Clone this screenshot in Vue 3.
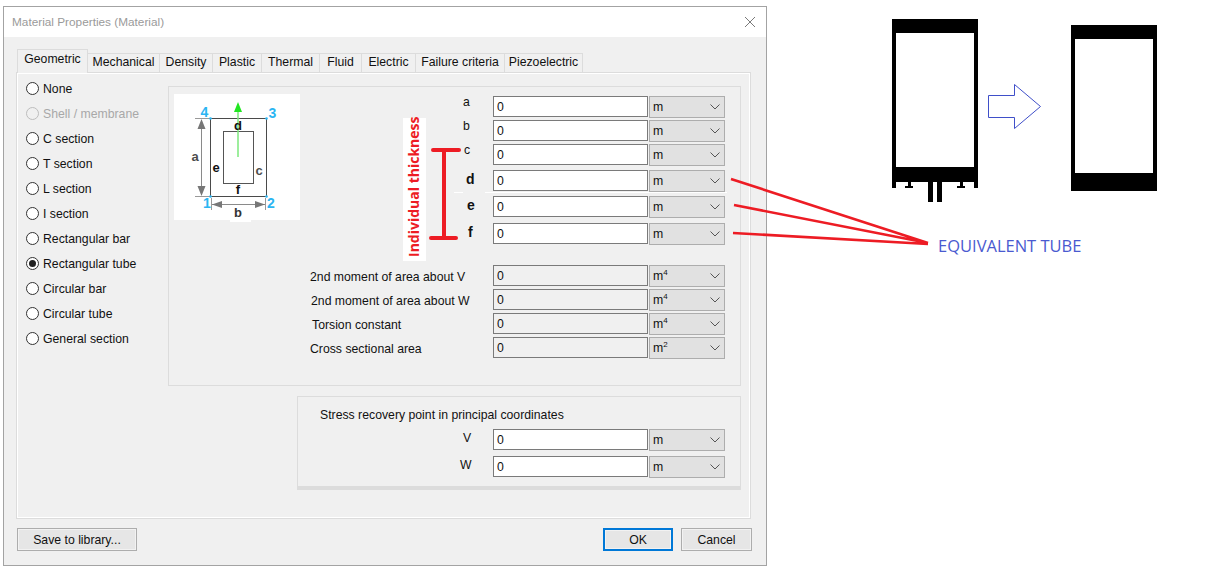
<script setup>
const tabs = [
  { label: 'Geometric', width: 71 },
  { label: 'Mechanical', width: 72 },
  { label: 'Density', width: 53 },
  { label: 'Plastic', width: 49 },
  { label: 'Thermal', width: 58 },
  { label: 'Fluid', width: 42 },
  { label: 'Electric', width: 54 },
  { label: 'Failure criteria', width: 89 },
  { label: 'Piezoelectric', width: 78 }
]

const sections = [
  { label: 'None' },
  { label: 'Shell / membrane', disabled: true },
  { label: 'C section' },
  { label: 'T section' },
  { label: 'L section' },
  { label: 'I section' },
  { label: 'Rectangular bar' },
  { label: 'Rectangular tube', checked: true },
  { label: 'Circular bar' },
  { label: 'Circular tube' },
  { label: 'General section' }
]

// top is the gap above the row, pad the label's left offset
const rows = [
  { label: 'a', pad: 163, top: 0, lift: true },
  { label: 'b', pad: 163, top: 3, lift: true },
  { label: 'c', pad: 164, top: 3, lift: true },
  { label: 'd', pad: 166, top: 5, bold: true },
  { label: 'e', pad: 167, top: 5, bold: true },
  { label: 'f', pad: 168, top: 6, bold: true },
  { label: '2nd moment of area about V', pad: 10, top: 21, unit: '4', off: true },
  { label: '2nd moment of area about W', pad: 11, top: 3, unit: '4', off: true },
  { label: 'Torsion constant', pad: 12, top: 3, unit: '4', off: true },
  { label: 'Cross sectional area', pad: 10, top: 3, unit: '2', off: true }
]

const stress = [
  { label: 'V', pad: 165, top: 0 },
  { label: 'W', pad: 162, top: 6 }
]
</script>

<template>
  <div class="canvas">
    <div class="dialog">
      <div class="titlebar">
        <span class="title">Material Properties (Material)</span>
        <svg class="close" width="12" height="12" viewBox="0 0 12 12">
          <path d="M1 1l10 10M11 1L1 11" stroke="#7a7a7a" fill="none" />
        </svg>
      </div>

      <div class="body">
        <div class="tabs">
          <div
            v-for="(tab, i) in tabs"
            :key="tab.label"
            class="tab"
            :class="{ active: i === 0 }"
            :style="{ width: tab.width + 'px' }"
          >{{ tab.label }}</div>
        </div>

        <div class="pane">
          <div class="sections">
            <div v-for="s in sections" :key="s.label" class="radio" :class="{ disabled: s.disabled }">
              <span class="dot" :class="{ checked: s.checked }"></span>
              <span>{{ s.label }}</span>
            </div>
          </div>

          <div class="right">
            <div class="panel">
              <svg class="diagram" width="126" height="126" viewBox="0 0 126 126">
                <rect width="126" height="126" fill="#fff" />
                <rect x="36.5" y="24.5" width="56" height="78" fill="none" stroke="#4a4a4a" />
                <rect x="49.5" y="37.5" width="30" height="52" fill="none" stroke="#555" />
                <path d="M21 24.5h15M21 102.5h15M37.5 104v12M91.5 104v12" stroke="#999" fill="none" />
                <path d="M27.5 26v75M38 110.5h53" stroke="#8a8a8a" fill="none" />
                <path d="M27.5 25l-4 10h8zM27.5 102l-4-10h8zM38 110.5l10-3.5v7zM91 110.5l-10-3.5v7z" fill="#777" />
                <path d="M64 63V16" stroke="#7ce87c" stroke-width="1.5" />
                <path d="M64 8l-4 10h8z" fill="#22e622" />
                <g fill="#2bb5f2">
                  <circle cx="36.5" cy="24.5" r="1.3" />
                  <circle cx="92.5" cy="24.5" r="1.3" />
                  <circle cx="36.5" cy="102.5" r="1.3" />
                  <circle cx="92.5" cy="102.5" r="1.3" />
                </g>
                <g class="dim">
                  <text x="21" y="67" fill="#4d4d4d">a</text>
                  <text x="64" y="36" fill="#111">d</text>
                  <text x="42" y="78" fill="#111">e</text>
                  <text x="85" y="81" fill="#4d4d4d">c</text>
                  <text x="64" y="100" fill="#111">f</text>
                  <text x="64" y="123" fill="#333">b</text>
                </g>
                <g class="num">
                  <text x="30.5" y="23">4</text>
                  <text x="98.5" y="24">3</text>
                  <text x="33" y="114">1</text>
                  <text x="97" y="114">2</text>
                </g>
              </svg>

              <div class="form">
                <div v-for="r in rows" :key="r.label" class="row" :style="{ marginTop: r.top + 'px' }">
                  <span
                    class="row-label"
                    :class="{ lift: r.lift, bold: r.bold, low: r.off }"
                    :style="{ paddingLeft: r.pad + 'px' }"
                  >{{ r.label }}</span>
                  <input class="field" :class="{ off: r.off }" value="0" readonly />
                  <div class="unit">
                    <span>m<sup v-if="r.unit">{{ r.unit }}</sup></span>
                    <svg width="10" height="6" viewBox="0 0 10 6"><path d="M.5.5L5 5 9.5.5" stroke="#555" fill="none" /></svg>
                  </div>
                </div>
              </div>
            </div>

            <div class="stress">
              <div class="stress-title">Stress recovery point in principal coordinates</div>
              <div v-for="r in stress" :key="r.label" class="row" :style="{ marginTop: r.top + 'px' }">
                <span class="stress-label" :style="{ paddingLeft: r.pad + 'px' }">{{ r.label }}</span>
                <input class="field" value="0" readonly />
                <div class="unit">
                  <span>m</span>
                  <svg width="10" height="6" viewBox="0 0 10 6"><path d="M.5.5L5 5 9.5.5" stroke="#555" fill="none" /></svg>
                </div>
              </div>
            </div>
          </div>
        </div>

        <div class="actions">
          <button class="btn save">Save to library...</button>
          <span class="spacer"></span>
          <button class="btn ok">OK</button>
          <button class="btn cancel">Cancel</button>
        </div>
      </div>
    </div>

    <!-- hand-drawn markup pasted over the screenshot -->
    <svg class="markup" width="1220" height="580" viewBox="0 0 1220 580">
      <rect x="403" y="118" width="23" height="143" fill="#fff" />
      <text class="thick" transform="translate(419 257) rotate(-90)">Individual thickness</text>
      <path d="M433 150h26M444 150v88M431 238h25" stroke="#ed1c24" stroke-width="4" stroke-linecap="round" fill="none" />
      <path d="M454 192.5h9M485 192.5h242" stroke="#fff" />
      <rect x="230" y="220" width="21" height="2" fill="#fff" />
      <path d="M731 179L928 243M734 205L928 243M733 233L928 244" stroke="#ed1c24" stroke-width="2.6" fill="none" />

      <g fill="#000">
        <rect x="892" y="19" width="86" height="163" />
        <rect x="892" y="181" width="4" height="7" />
        <rect x="974" y="181" width="4" height="7" />
        <rect x="908" y="181" width="3" height="5" />
        <rect x="905" y="186" width="8" height="2" />
        <rect x="960" y="181" width="3" height="5" />
        <rect x="957" y="186" width="8" height="2" />
        <rect x="928" y="181" width="5" height="21" />
        <rect x="937" y="181" width="5" height="21" />
        <rect x="1071" y="25" width="86" height="166" />
      </g>
      <rect x="896" y="33" width="78" height="134" fill="#fff" />
      <rect x="1075" y="39" width="78" height="134" fill="#fff" />
      <path d="M988.5 95.5h26v-11l26 22-26 22v-11h-26z" fill="#fff" stroke="#3f4fc9" />
      <text class="tube" x="938" y="252">EQUIVALENT TUBE</text>
    </svg>
  </div>
</template>

<style scoped>
.canvas {
  position: relative;
  width: 1220px;
  height: 580px;
  overflow: hidden;
  background: #fff;
  font-family: "Liberation Sans", Arial, sans-serif;
  font-size: 12.25px;
  color: #111;
}

.dialog {
  position: absolute;
  left: 3px;
  top: 6px;
  width: 764px;
  height: 560px;
  box-sizing: border-box;
  border: 1px solid #a3a3a3;
  background: #f0f0f0;
  display: flex;
  flex-direction: column;
}

.titlebar {
  height: 30px;
  background: #fff;
  display: flex;
  align-items: center;
  justify-content: space-between;
  padding: 0 10px 0 8px;
  flex-shrink: 0;
}

.title {
  color: #9a9a9a;
  font-size: 11.8px;
}

.body {
  flex: 1;
  padding: 13px 15px 0 12px;
  display: flex;
  flex-direction: column;
}

.tabs {
  display: flex;
  align-items: flex-end;
  height: 22px;
  margin-left: 1px;
  position: relative;
  z-index: 1;
}

.tab {
  height: 19px;
  line-height: 17px;
  text-align: center;
  box-sizing: border-box;
  border: 1px solid #dcdcdc;
  border-left: 0;
  border-bottom: 0;
  background: #f0f0f0;
}

.tab.active {
  height: 24px;
  line-height: 18px;
  border-left: 1px solid #dcdcdc;
  margin-bottom: -1px;
}

.pane {
  height: 447px;
  box-sizing: border-box;
  border: 1px solid #dcdcdc;
  box-shadow: inset 0 0 0 1px #fff;
  display: flex;
}

.sections {
  width: 151px;
  padding: 3px 0 0 9px;
  box-sizing: border-box;
}

.radio {
  height: 25px;
  display: flex;
  align-items: center;
  gap: 4px;
}

.radio.disabled {
  color: #a8a8a8;
}

.dot {
  width: 13px;
  height: 13px;
  box-sizing: border-box;
  border: 1px solid #333;
  border-radius: 50%;
  background: #fff;
  display: flex;
  align-items: center;
  justify-content: center;
}

.disabled .dot {
  border-color: #bdbdbd;
  background: #f0f0f0;
}

.dot.checked::after {
  content: "";
  width: 7px;
  height: 7px;
  border-radius: 50%;
  background: #222;
}

.right {
  width: 573px;
  padding-top: 13px;
}

.panel {
  height: 300px;
  box-sizing: border-box;
  border: 1px solid #dcdcdc;
  padding: 7px 15px 0 5px;
  display: flex;
}

.diagram {
  flex-shrink: 0;
  display: block;
}

.form {
  margin-top: 2px;
}

.row {
  display: flex;
  height: 21px;
  align-items: center;
}

.row-label {
  width: 193px;
  box-sizing: border-box;
  white-space: nowrap;
}

.row-label.lift {
  padding-bottom: 9px;
}

.row-label.low {
  padding-top: 2px;
}

.row-label.bold {
  font-weight: bold;
  font-size: 14px;
  padding-bottom: 3px;
}

.field {
  width: 155px;
  height: 21px;
  box-sizing: border-box;
  border: 1px solid #7a7a7a;
  padding: 0 3px;
  background: #fff;
  font: inherit;
  color: #111;
  outline: none;
}

.field.off {
  background: #f0f0f0;
}

.unit {
  width: 76px;
  height: 22px;
  margin-left: 1px;
  box-sizing: border-box;
  border: 1px solid #adadad;
  background: #e1e1e1;
  display: flex;
  align-items: center;
  justify-content: space-between;
  padding: 0 3px;
}

.unit svg {
  margin-right: 1px;
}

.unit sup {
  font-size: 8px;
  line-height: 0;
}

.stress {
  margin: 10px 0 0 129px;
  width: 444px;
  height: 94px;
  box-sizing: border-box;
  border: 1px solid #dcdcdc;
  border-bottom: 4px solid #dcdcdc;
}

.stress-title {
  padding: 11px 0 0 22px;
  height: 32px;
  box-sizing: border-box;
}

.stress-label {
  width: 195px;
  box-sizing: border-box;
  padding-bottom: 4px;
}

.actions {
  display: flex;
  align-items: center;
  margin: 9px -1px 0 1px;
}

.spacer {
  flex: 1;
}

.btn {
  height: 23px;
  box-sizing: border-box;
  border: 1px solid #adadad;
  box-shadow: inset 0 0 0 1px #f2f2f2;
  background: #e6e6e6;
  font: inherit;
  color: #111;
  padding: 0;
}

.save {
  width: 120px;
}

.ok {
  width: 70px;
  border: 2px solid #0078d7;
}

.cancel {
  width: 71px;
  margin-left: 8px;
}

.markup {
  position: absolute;
  left: 0;
  top: 0;
  pointer-events: none;
}

.dim text {
  font: bold 13px "Liberation Sans", Arial, sans-serif;
  text-anchor: middle;
}

.num text {
  font: bold 14px "Liberation Sans", Arial, sans-serif;
  fill: #2bb5f2;
  text-anchor: middle;
}

.thick {
  font: bold 14px "Open Sans", sans-serif;
  fill: #ed1c24;
}

.tube {
  font: 16.5px "Open Sans", sans-serif;
  fill: #4a5ad0;
}
</style>
